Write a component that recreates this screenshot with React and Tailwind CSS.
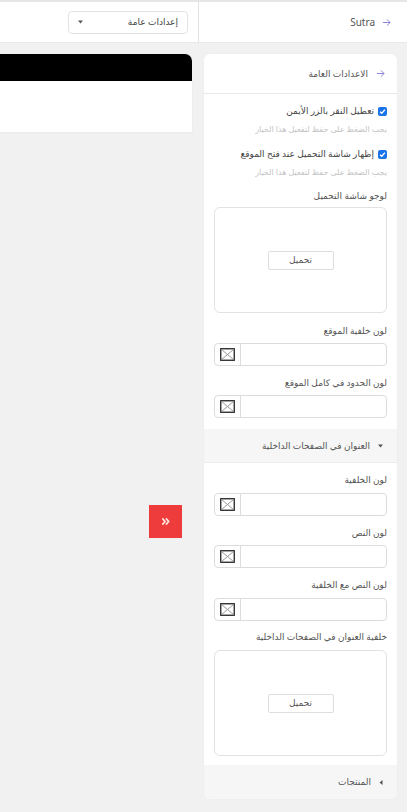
import React from "react";

function Swatch() {
  return (
    <div className="w-[26px] h-full flex items-center justify-center border-r border-[#dcdcdc]">
      <svg width="15" height="13" viewBox="0 0 15 13">
        <rect x="0.75" y="0.75" width="13.5" height="11.5" fill="#fff" stroke="#222" strokeWidth="1.3" />
        <line x1="1.5" y1="1.5" x2="13.5" y2="11.5" stroke="#9a9a9a" />
        <line x1="13.5" y1="1.5" x2="1.5" y2="11.5" stroke="#9a9a9a" />
      </svg>
    </div>
  );
}

function ColorInput({ className = "" }) {
  return (
    <div className={"h-[23px] border border-[#dcdcdc] rounded-[4px] flex bg-white " + className}>
      <div className="flex-1" />
      <Swatch />
    </div>
  );
}

function Label({ children, className = "" }) {
  return <div className={"h-[14px] leading-[14px] text-[9px] text-[#555] " + className}>{children}</div>;
}

function Upload({ className = "" }) {
  return (
    <div className={"h-[106px] border border-[#e2e2e2] rounded-[6px] flex items-center justify-center " + className}>
      <div className="w-[66px] h-[19px] border border-[#dedede] rounded-[2px] flex items-center justify-center text-[9px] text-[#555]">
        تحميل
      </div>
    </div>
  );
}

function Check({ text, className = "" }) {
  return (
    <div className={"h-[14px] flex items-center gap-[4px] " + className}>
      <div className="w-[9px] h-[9px] rounded-[2px] bg-[#1a73e8] flex items-center justify-center">
        <svg width="7" height="7" viewBox="0 0 8 8">
          <path d="M1.2 4.2 L3.2 6 L6.8 1.8" fill="none" stroke="#fff" strokeWidth="1.5" />
        </svg>
      </div>
      <span className="text-[9px] text-[#444] leading-[14px]">{text}</span>
    </div>
  );
}

function Hint({ className = "" }) {
  return (
    <div className={"h-[12px] leading-[12px] text-[8px] text-[#c4c4c4] " + className}>
      يجب الضغط على حفظ لتفعيل هذا الخيار
    </div>
  );
}

function CaretDown() {
  return (
    <svg width="5" height="4" viewBox="0 0 5 4">
      <path d="M0 0.5 H5 L2.5 3.5 Z" fill="#555" />
    </svg>
  );
}

function CaretLeft() {
  return (
    <svg width="4" height="5" viewBox="0 0 4 5">
      <path d="M3.5 0 V5 L0.5 2.5 Z" fill="#555" />
    </svg>
  );
}

export default function App() {
  return (
    <div
      className="w-[407px] h-[812px] bg-[#f1f1f1] relative overflow-hidden"
      style={{ fontFamily: '"Noto Sans", "DejaVu Sans", sans-serif' }}
    >
      {/* top bar */}
      <div className="h-[43px] bg-white border-t-[2px] border-[#e6e6e6] border-b border-b-[#e8e8e8] flex">
        <div className="w-[198px] flex items-center justify-end pr-[10px]">
          <div
            dir="rtl"
            className="w-[120px] h-[23px] border border-[#e3e3e3] rounded-[4px] flex items-center justify-between pr-[9px] pl-[9px] bg-white"
          >
            <span className="text-[9px] text-[#444]">إعدادات عامة</span>
            <CaretDown />
          </div>
        </div>
        <div className="w-px bg-[#e3e3e3]" />
        <div className="flex-1 flex items-center justify-end gap-[7px] pr-[16px]">
          <span className="text-[10px] text-[#555]">Sutra</span>
          <svg width="9" height="9" viewBox="0 0 10 10">
            <path d="M1 5 H9 M5.5 1.5 L9 5 L5.5 8.5" fill="none" stroke="#8c84d6" strokeWidth="1.1" />
          </svg>
        </div>
      </div>

      {/* main */}
      <div className="flex gap-[12px] pt-[11px] pr-[10px]">
        <div className="w-[192px]">
          <div className="h-[27px] bg-black rounded-tr-[7px]" />
          <div className="h-[51px] bg-white shadow-[0_1px_2px_rgba(0,0,0,0.04)]" />
        </div>

        <div dir="rtl" className="w-[193px] h-[745px] bg-white rounded-[6px] overflow-hidden flex flex-col shadow-[0_0_2px_rgba(0,0,0,0.04)]">
          <div className="h-[40px] border-b border-[#e8e8e8] flex items-center gap-[8px] pr-[12px]">
            <svg width="9" height="9" viewBox="0 0 10 10">
              <path d="M1 5 H9 M5.5 1.5 L9 5 L5.5 8.5" fill="none" stroke="#8c84d6" strokeWidth="1.1" />
            </svg>
            <span className="text-[9px] text-[#555]">الاعدادات العامة</span>
          </div>

          <div className="px-[10px] pt-[10px] pb-[11px] flex flex-col">
            <Check text="تعطيل النقر بالزر الأيمن" />
            <Hint className="mt-[5px]" />
            <Check text="إظهار شاشة التحميل عند فتح الموقع" className="mt-[12px]" />
            <Hint className="mt-[5px]" />
            <Label className="mt-[11px]">لوجو شاشة التحميل</Label>
            <Upload className="mt-[4px]" />
            <Label className="mt-[11px]">لون خلفية الموقع</Label>
            <ColorInput className="mt-[5px]" />
            <Label className="mt-[10px]">لون الحدود في كامل الموقع</Label>
            <ColorInput className="mt-[5px]" />
          </div>

          <div className="h-[34px] bg-[#f6f6f6] border-b border-[#ececec] flex items-center gap-[8px] pr-[14px]">
            <CaretDown />
            <span className="text-[9px] text-[#555]">العنوان في الصفحات الداخلية</span>
          </div>

          <div className="px-[10px] pt-[10px] pb-[9px] flex flex-col">
            <Label>لون الخلفية</Label>
            <ColorInput className="mt-[6px]" />
            <Label className="mt-[10px]">لون النص</Label>
            <ColorInput className="mt-[5px]" />
            <Label className="mt-[10px]">لون النص مع الخلفية</Label>
            <ColorInput className="mt-[6px]" />
            <Label className="mt-[9px]">خلفية العنوان في الصفحات الداخلية</Label>
            <Upload className="mt-[6px]" />
          </div>

          <div className="h-[34px] bg-[#f6f6f6] flex items-center gap-[8px] pr-[14px]">
            <CaretLeft />
            <span className="text-[9px] text-[#555]">المنتجات</span>
          </div>
        </div>
      </div>

      {/* floating toggle */}
      <div className="absolute left-[149px] top-[505px] w-[33px] h-[33px] bg-[#ee3b3b] flex items-center justify-center">
        <svg width="9" height="9" viewBox="0 0 10 10">
          <path d="M1.5 1.5 L4.5 5 L1.5 8.5 M5.5 1.5 L8.5 5 L5.5 8.5" fill="none" stroke="#ffe3dc" strokeWidth="1.9" />
        </svg>
      </div>
    </div>
  );
}
